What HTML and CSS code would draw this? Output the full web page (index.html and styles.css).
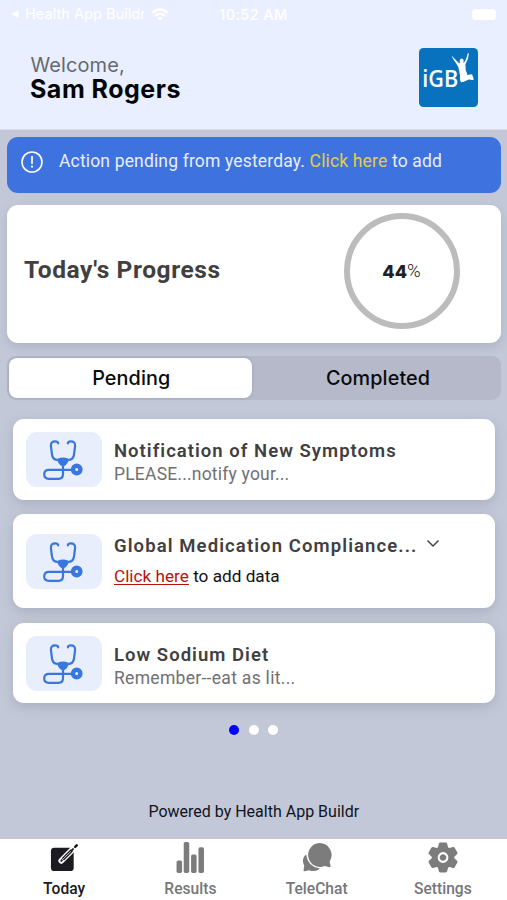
FILE: index.html
```html
<!DOCTYPE html>
<html lang="en">
<head>
<meta charset="utf-8">
<title>Today</title>
<link rel="stylesheet" href="styles.css">
</head>
<body>
<svg class="defs" aria-hidden="true">
  <symbol id="steth" viewBox="0 0 40 42">
    <g fill="none" stroke="currentColor" stroke-width="2.2" stroke-linecap="round" stroke-linejoin="round">
      <path d="M15.2 3.3Q14.8 1.4 12.4 1.4C9 1.4 7.8 2.6 7.9 6L9 14.5Q9.6 19.5 14 19.8"/>
      <path d="M24.8 3.3Q25.2 1.4 27.6 1.4C31 1.4 32.2 2.6 32.1 6L31 14.5Q30.4 19.5 26 19.8"/>
      <path d="M20 25V34Q20 38.8 15.5 38.8H6Q1.2 38.8 1.2 34.3T6 29.8H29"/>
    </g>
    <path fill="currentColor" d="M15 18.6Q20 16.6 25 18.6L26 20Q24 24.8 21.2 26H18.8Q16 24.8 14 20Z"/>
    <circle cx="33.7" cy="29.5" r="3.7" fill="none" stroke="currentColor" stroke-width="4.4"/>
  </symbol>
</svg>
<div class="app">
  <header class="header">
    <div class="status">
      <div class="status-left">
        <svg class="back" viewBox="0 0 10 10"><path d="M9 0V10L0 5Z"/></svg>
        <span class="back-app">Health App Buildr</span>
        <svg class="wifi" viewBox="0 0 18 13"><g fill="none" stroke="#fff" stroke-width="2.5"><path d="M1 5Q9-2 17 5"/><path d="M4 8Q9 3.5 14 8"/></g><path fill="#fff" d="M6.3 10Q9 7.8 11.7 10L9 12.8Z"/></svg>
      </div>
      <span class="clock">10:52 AM</span>
      <span class="battery"></span>
    </div>
    <div class="welcome">
      <div>
        <div class="hello">Welcome,</div>
        <div class="name">Sam Rogers</div>
      </div>
      <svg class="logo" viewBox="0 0 59 59">
        <rect width="59" height="59" rx="4.5" fill="#0872be"/>
        <text x="3.3" y="38.7" textLength="36" lengthAdjust="spacingAndGlyphs">iGB</text>
        <path fill="#fff" d="M33.2 8.3L39 14.3Q39.8 15.3 41 15.2Q39.8 11 42.8 10.5Q45.5 11 44.3 15Q46.8 13.5 48.8 5.2L50 5.6Q49.3 12 46.4 16.5Q46 22 48.5 27L53 26.2L53.8 28.3L54.8 31.5L53.8 32L49.8 31.5L44.8 33.8L42 34.3L41 32Q41.5 28 40.2 23Q39.5 18 37.5 16Q34.5 12 32.8 8.6Z"/>
      </svg>
    </div>
  </header>
  <main class="main">
    <div class="alert">
      <svg class="warn" viewBox="0 0 22 22"><circle cx="11" cy="11" r="10" fill="none" stroke="#fff" stroke-width="1.6"/><path d="M11 5.5V12.3" stroke="#fff" stroke-width="1.7" stroke-linecap="round"/><circle cx="11" cy="15.6" r="1.15" fill="#fff"/></svg>
      <span>Action pending from yesterday. <a class="alert-link">Click here</a> to add</span>
    </div>
    <section class="progress">
      <h2 class="progress-title">Today's Progress</h2>
      <div class="ring"><b>44</b><span>%</span></div>
    </section>
    <div class="segmented">
      <div class="segment active"><span>Pending</span></div>
      <div class="segment other"><span>Completed</span></div>
    </div>
    <div class="tasks">
      <article class="task">
        <div class="thumb"><svg class="steth"><use href="#steth"/></svg></div>
        <div class="task-text">
          <div class="task-title">Notification of New Symptoms</div>
          <div class="task-note">PLEASE...notify your...</div>
        </div>
      </article>
      <article class="task tall">
        <div class="thumb"><svg class="steth"><use href="#steth"/></svg></div>
        <div class="task-text">
          <div class="task-title compliance">Global Medication Compliance...<svg class="chevron" viewBox="0 0 14 9"><path d="M1.5 1.5L7 7L12.5 1.5" fill="none" stroke="#444" stroke-width="1.5"/></svg></div>
          <div class="task-action"><a class="task-link">Click here</a> to add data</div>
        </div>
      </article>
      <article class="task">
        <div class="thumb"><svg class="steth"><use href="#steth"/></svg></div>
        <div class="task-text">
          <div class="task-title">Low Sodium Diet</div>
          <div class="task-note remember">Remember--eat as lit...</div>
        </div>
      </article>
    </div>
    <div class="dots"><i class="dot on"></i><i class="dot"></i><i class="dot"></i></div>
    <div class="powered">Powered by Health App Buildr</div>
  </main>
  <nav class="tabs">
    <div class="tab selected">
      <svg class="tab-icon" viewBox="0 0 32 32"><rect x="2" y="6" width="23.5" height="24" rx="3.5" fill="#1c1b22"/><path d="M12.7 19.4L26.5 5.6" stroke="#fff" stroke-width="6" stroke-linecap="round"/><path d="M12.7 19.4L24.8 7.3" stroke="#1c1b22" stroke-width="2" stroke-linecap="round"/><path d="M14.5 17.6L23.5 8.6" stroke="#1c1b22" stroke-width="3.2"/><path d="M13.3 18.8L22.5 9.6" stroke="#fff" stroke-width=".8"/><path d="M27 5L28.6 3.4" stroke="#1c1b22" stroke-width="2.6" stroke-linecap="round"/></svg>
      <span>Today</span>
    </div>
    <div class="tab">
      <svg class="tab-icon" viewBox="0 0 32 32"><g fill="#7c7c7c"><rect x="1.6" y="19" width="5.7" height="13" rx="1.7"/><rect x="9" y="0" width="5.7" height="32" rx="1.7"/><rect x="16.6" y="13" width="5.7" height="19" rx="1.7"/><rect x="24.2" y="5.4" width="5.7" height="26.6" rx="1.7"/></g></svg>
      <span>Results</span>
    </div>
    <div class="tab">
      <svg class="tab-icon" viewBox="0 0 32 32"><path fill="#7c7c7c" d="M4.2 12.8Q.6 15.5 1 20.5Q1.3 22.5 2.3 24.3L1.6 29.1Q1.6 30.5 3.1 30.2L7.1 29.1Q14 31.5 18.5 27.4Q6 25.5 4.2 12.8Z"/><path fill="#7c7c7c" d="M18 1A12.4 12.4 0 1 0 23.3 24.9L28.3 26.1Q29.7 26.2 29.5 24.8L28.6 20A12.4 12.4 0 0 0 18 1Z"/></svg>
      <span>TeleChat</span>
    </div>
    <div class="tab">
      <svg class="tab-icon" viewBox="0 0 32 32"><g fill="#7c7c7c" transform="translate(15.5 16)"><circle r="11.5"/><g id="pair"><path d="M-5.6-9L-4.3-14.2Q-4-15.4-3-15.4H3Q4-15.4 4.3-14.2L5.6-9ZM-5.6 9L-4.3 14.2Q-4 15.4-3 15.4H3Q4 15.4 4.3 14.2L5.6 9Z"/></g><use href="#pair" transform="rotate(60)"/><use href="#pair" transform="rotate(120)"/><circle r="4.5" fill="none" stroke="#fff" stroke-width="2.1"/></g></svg>
      <span>Settings</span>
    </div>
  </nav>
</div>
</body>
</html>
```
FILE: styles.css
```css
* { box-sizing: border-box; }
body { margin: 0; font-family: Roboto, sans-serif; }
.defs { display: none; }
.app { width: 507px; height: 900px; display: flex; flex-direction: column; overflow: hidden; background: #c2c8d7; white-space: nowrap; }
.header { height: 130px; background: #e9efff; border-bottom: 1px solid #dbe0ec; font-family: Inter, sans-serif; }
.status { height: 28px; padding: 0 11px; display: grid; grid-template-columns: 1fr auto 1fr; align-items: center; color: #fff; font-size: 15px; }
.status-left { display: flex; align-items: center; }
.back { width: 9px; height: 8px; fill: #fff; }
.back-app { width: 119px; margin-left: 5px; overflow: hidden; font-size: 14.6px; }
.wifi { width: 18px; height: 13px; margin-left: 7px; }
.clock { font-weight: 500; font-size: 14.5px; letter-spacing: .4px; }
.battery { justify-self: end; width: 24px; height: 11px; border-radius: 4px; background: #fff; }
.welcome { display: flex; justify-content: space-between; padding: 20px 29.5px 0 30.5px; }
.hello { padding-top: 5px; color: #666970; font-size: 20px; line-height: 25px; letter-spacing: .1px; }
.name { color: #050608; font-weight: 700; font-size: 25px; line-height: 22px; letter-spacing: .5px; margin-left: -.5px; }
.logo { width: 59px; height: 59px; }
.logo text { fill: #fff; font: 600 23px "Open Sans", sans-serif; }
.main { flex: 1; display: flex; flex-direction: column; padding: 6.5px 6.5px 0 7px; }
.alert { height: 56px; padding: 14px 0 0 14px; display: flex; align-items: flex-start; gap: 16px; border-radius: 11px; background: #3e72df; color: #e8eeff; font-size: 17.5px; line-height: 22px; letter-spacing: .16px; }
.warn { width: 22px; height: 22px; }
.alert > span { margin-top: -.5px; }
.alert-link { color: #e2ce46; }
.progress { height: 138px; margin-top: 12.5px; padding: 0 41px 6px 17px; display: flex; align-items: center; justify-content: space-between; border-radius: 11px; background: #fff; box-shadow: 0 4px 10px #858c9f55; }
.progress-title { margin: 0 0 3px; color: #404041; font-size: 24.5px; font-weight: 700; letter-spacing: .6px; }
.ring { width: 116px; height: 116px; border: 6px solid #bcbcbc; border-radius: 50%; display: flex; align-items: center; justify-content: center; color: #202022; font-size: 18.5px; }
.ring span { font-weight: 300; }
.ring b { font: 800 18px Inter, sans-serif; }
.segmented { height: 44px; margin-top: 12.5px; padding: 2px; display: grid; grid-template-columns: 242.5px 1fr; border-radius: 9px; background: #b5b9c9; color: #090a0c; font: 500 19.8px Inter, sans-serif; }
.segment { display: flex; align-items: center; justify-content: center; padding-left: 2px; border-radius: 8px; letter-spacing: .1px; }
.segment.active { background: #fff; box-shadow: 0 0 3px #7d849788; }
.segment.other { padding-left: 6px; }
.tasks { display: flex; flex-direction: column; gap: 14.5px; margin: 19.5px 6px 0; }
.task { height: 80.5px; padding: 13px 12.5px; display: flex; gap: 12.5px; border-radius: 11px; background: #fff; box-shadow: 0 4px 12px #858b9e66; }
.task.tall { height: 94px; padding-top: 19.5px; }
.thumb { width: 76px; height: 55px; flex: none; display: flex; align-items: center; justify-content: center; border-radius: 11px; background: #e9eefd; color: #3977df; }
.steth { width: 40px; height: 42px; margin: 3px 1px 0 0; }
.task-text { padding-top: 8px; }
.task-title { color: #404041; font-size: 18.5px; font-weight: 600; line-height: 22px; letter-spacing: 1.03px; }
.task-title.compliance { letter-spacing: 1.1px; }
.task-note { margin-top: 1px; color: #707073; font-size: 17.5px; line-height: 22px; letter-spacing: .2px; }
.task-note.remember { letter-spacing: .3px; }
.tall .task-text { padding-top: 1px; }
.chevron { width: 14px; height: 9px; margin-left: 8.5px; vertical-align: 4px; }
.task-action { margin-top: 9px; color: #111; font-size: 17.2px; line-height: 20px; }
.task-link { color: #b8120d; text-decoration: underline; text-underline-offset: 2px; }
.dots { display: flex; justify-content: center; gap: 9.5px; margin-top: 22px; }
.dot { width: 10px; height: 10px; border-radius: 50%; background: #fff; }
.dot.on { background: #00f; }
.powered { margin-top: 66.5px; text-align: center; color: #10131d; font-size: 16px; line-height: 20px; }
.tabs { height: 61.5px; padding: 0 1px 0 1px; display: grid; grid-template-columns: repeat(4, 1fr); background: #fff; color: #77777a; font-size: 15.6px; font-weight: 500; }
.tab { display: flex; flex-direction: column; align-items: center; padding-top: 3.5px; }
.tab-icon { width: 31px; height: 31px; margin-left: 1px; }
.tab > span { margin-top: 5.5px; line-height: 20px; }
.selected { color: #1c1b22; }
```
